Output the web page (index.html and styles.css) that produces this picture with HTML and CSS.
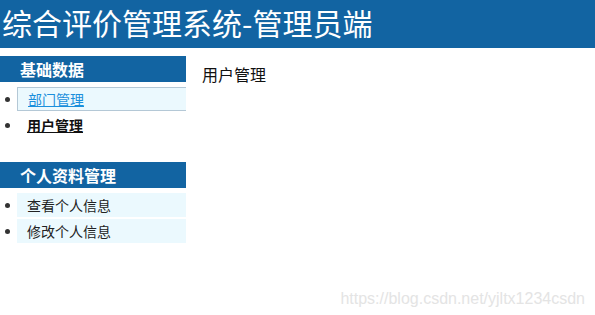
FILE: index.html
```html
<!DOCTYPE html>
<html lang="zh-CN">
<head>
<meta charset="utf-8">
<title>综合评价管理系统-管理员端</title>
<link rel="stylesheet" href="styles.css">
</head>
<body>
<header class="top">
  <h1 class="title">综合评价管理系统-管理员端</h1>
</header>
<div class="layout">
  <aside class="sidebar">
    <section class="group">
      <h2 class="group-title">基础数据</h2>
      <ul class="menu">
        <li class="item"><div class="box box-active"><a class="link" href="#">部门管理</a></div></li>
        <li class="item"><div class="box box-plain"><a class="link-strong" href="#">用户管理</a></div></li>
      </ul>
    </section>
    <section class="group group-second">
      <h2 class="group-title">个人资料管理</h2>
      <ul class="menu">
        <li class="item"><div class="box">查看个人信息</div></li>
        <li class="item"><div class="box">修改个人信息</div></li>
      </ul>
    </section>
  </aside>
  <main class="content">
    <p class="page-title">用户管理</p>
  </main>
</div>
<div class="watermark">https://blog.csdn.net/yjltx1234csdn</div>
</body>
</html>
```
FILE: styles.css
```css
html, body {
  margin: 0;
  padding: 0;
  background: #ffffff;
  font-family: "Noto Sans CJK SC", "Noto Sans", sans-serif;
  color: #222222;
}

.top {
  height: 48px;
  background: #1264a2;
}

.title {
  margin: 0;
  padding-left: 2px;
  font-size: 30px;
  font-weight: normal;
  line-height: 45px;
  color: #ffffff;
}

.layout {
  display: flex;
  margin-top: 8px;
}

.sidebar {
  width: 186px;
  flex: none;
}

.group-title {
  margin: 0;
  height: 26px;
  line-height: 26px;
  padding-left: 20px;
  background: #1264a2;
  color: #ffffff;
  font-size: 16px;
  font-weight: bold;
}

.group-second {
  margin-top: 25px;
}

.menu {
  margin: 5px 0 0;
  padding: 0;
  list-style: none;
}

.item {
  display: flex;
  align-items: center;
  margin-bottom: 2px;
}

.item::before {
  content: "";
  flex: none;
  width: 5px;
  height: 5px;
  border-radius: 50%;
  background: #333333;
  margin: 1px 7px 0 5px;
}

.box {
  flex: 1;
  height: 24px;
  line-height: 24px;
  padding-left: 10px;
  font-size: 14px;
  background: #ebf9fe;
  color: #222222;
}

.box-active {
  height: 22px;
  line-height: 22px;
  border: 1px solid #b4c8d6;
  border-right: none;
}

.box-plain {
  background: transparent;
}

.link {
  color: #1a8fdc;
  text-decoration: underline;
}

.link-strong {
  color: #111111;
  font-weight: bold;
  text-decoration: underline;
}

.content {
  flex: 1;
  padding-left: 16px;
}

.page-title {
  margin: 7px 0 0;
  font-size: 16px;
  line-height: 22px;
  color: #111111;
}

.watermark {
  position: absolute;
  right: 10px;
  top: 290px;
  font-family: "Liberation Sans", Arial, sans-serif;
  font-size: 16px;
  color: #e4e4e4;
}
```
